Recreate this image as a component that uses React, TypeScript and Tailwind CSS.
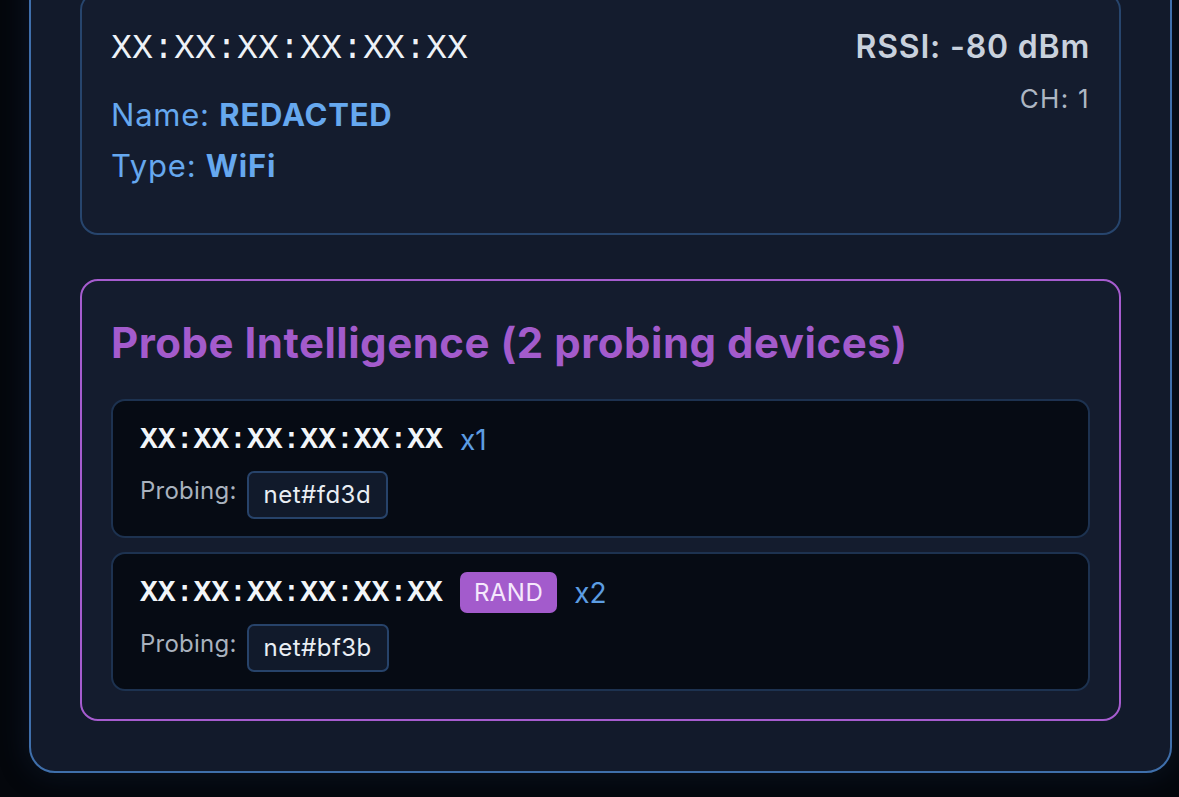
import React from 'react';

const probes = [
  { mac: 'XX:XX:XX:XX:XX:XX', rand: false, count: 1, ssid: 'net#fd3d' },
  { mac: 'XX:XX:XX:XX:XX:XX', rand: true, count: 2, ssid: 'net#bf3b' },
];

const sans = "font-['Inter','Noto_Sans',sans-serif]";
const mono = "font-['Liberation_Mono','DejaVu_Sans_Mono',monospace]";

export default function App() {
  return (
    <div className={`h-[797px] overflow-hidden bg-[#04070c] ${sans}`}>
      <div className="ml-[29px] w-[1143px] -mt-[62px] rounded-[26px] border-2 border-[#3f6fab] bg-[#121a2b] px-[49px] pt-[52px] pb-[50px] shadow-[0_0_30px_rgba(30,50,90,0.35)]">
        {/* device card */}
        <div className="rounded-[18px] border-2 border-[#27456d] bg-[#141c2e] px-[29px] pt-[35px] pb-[47px]">
          <div className="flex justify-between">
            <div>
              <div className={`${mono} text-[35px] leading-[40px] text-[#eef2f7]`}>XX:XX:XX:XX:XX:XX</div>
              <div className="mt-[26px] text-[31px] leading-[40px] tracking-[0.025em] text-[#66a8ef]">
                Name: <span className="font-bold">REDACTED</span>
              </div>
              <div className="mt-[11px] text-[31px] leading-[40px] tracking-[0.025em] text-[#66a8ef]">
                Type: <span className="font-bold">WiFi</span>
              </div>
            </div>
            <div className="text-right">
              <div className="text-[32px] leading-[36px] font-semibold tracking-[0.025em] text-[#c9d1dd]">RSSI: -80 dBm</div>
              <div className="mt-[19px] text-[26px] leading-[30px] tracking-[0.05em] text-[#adb6c3]">CH: 1</div>
            </div>
          </div>
        </div>

        {/* probe intelligence */}
        <div className="mt-[44px] rounded-[18px] border-2 border-[#a65ccf] bg-[#141c2e] px-[29px] pt-[38px] pb-[28px]">
          <h2 className="text-[42px] leading-[48px] font-bold tracking-[0.012em] text-[#a35bcc]">
            Probe Intelligence (2 probing devices)
          </h2>
          <div className="mt-[32px] flex flex-col gap-[14px]">
            {probes.map((p, i) => (
              <div key={i} className="h-[139px] rounded-[14px] border-2 border-[#1d3250] bg-[#060b14] px-[27px] pt-[18px]">
                <div className="flex h-[41px] items-center gap-[17px]">
                  <span className={`${mono} font-bold text-[29.7px] leading-[36px] text-[#f1f5f9]`}>{p.mac}</span>
                  {p.rand && (
                    <span className="rounded-[7px] bg-[#a35bcc] px-[14px] text-[24px] leading-[41px] tracking-[0.02em] text-[#f5e8fc]">RAND</span>
                  )}
                  <span className="text-[28px] leading-[36px] text-[#5c9de2]">x{p.count}</span>
                </div>
                <div className="mt-[11px] flex items-start gap-[10px]">
                  <span className="mt-[5px] text-[24px] leading-[30px] tracking-[0.01em] text-[#a9b2be]">Probing:</span>
                  <span className="rounded-[7px] border-2 border-[#27436a] bg-[#111a2b] px-[15px] text-[24px] leading-[44px] tracking-[0.02em] text-[#e9eef4]">
                    {p.ssid}
                  </span>
                </div>
              </div>
            ))}
          </div>
        </div>
      </div>
    </div>
  );
}
